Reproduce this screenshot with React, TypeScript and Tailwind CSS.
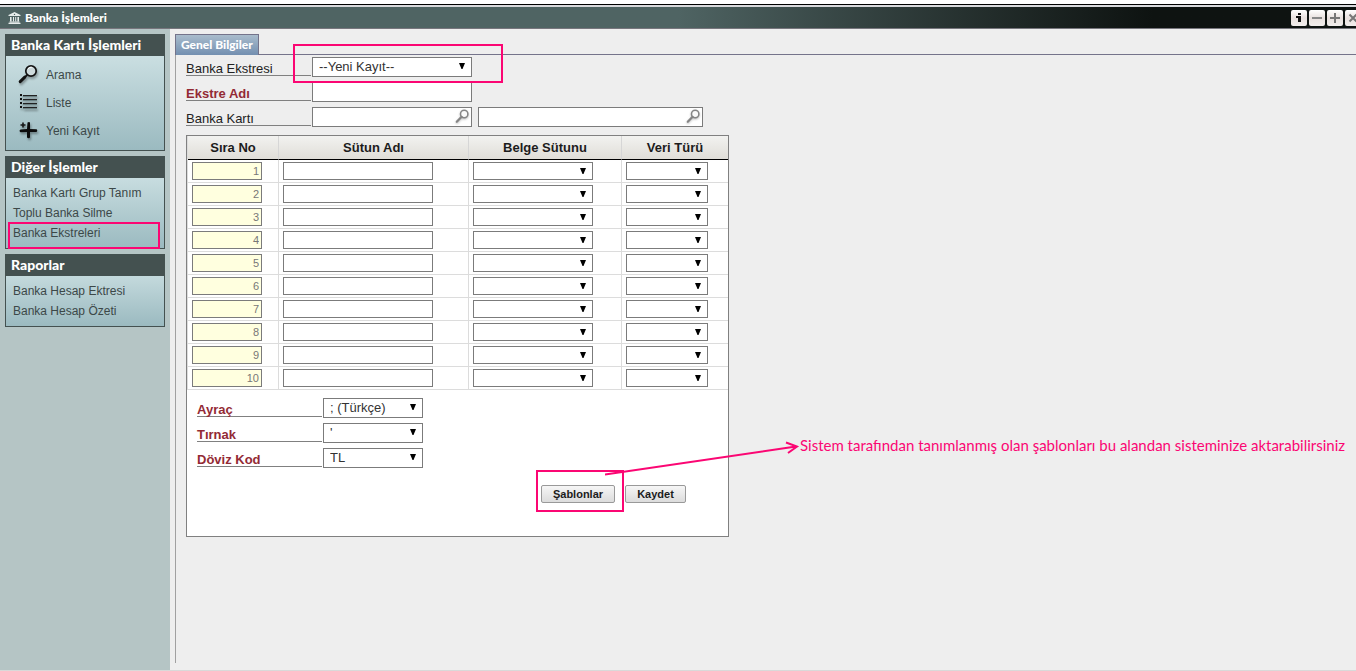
import React from "react";

const ui = "font-['Liberation_Sans',Arial,sans-serif]";
const heading = "font-['Lato','Open_Sans',sans-serif]";

function BankIcon() {
  return (
    <svg width="13" height="12" viewBox="0 0 13 12" fill="#e6eceb" aria-hidden="true">
      <path d="M6.5 0 0.5 3v1h12V3z" />
      <path d="M2 5h1.6v4.500H2zM5 5h1v4.500H5zM7.200 5h1v4.500h-1zM9.400 5H11v4.500H9.400z" />
      <path d="M1.500 9.500h10v1h-10zM0.500 10.800h12V12H0.500z" />
      <circle cx="6.500" cy="2.400" r="0.700" fill="#4f6463" />
    </svg>
  );
}

function SearchIcon() {
  return (
    <svg width="22" height="22" viewBox="0 0 22 22" fill="none" aria-hidden="true" className="drop-shadow-[1px_2px_1px_rgba(0,0,0,0.35)]">
      <circle cx="13" cy="7" r="5.200" stroke="#111" strokeWidth="1.700" fill="#e8f2f3" fillOpacity="0.700" />
      <path d="M10 4.800q1.500-2 3.800-1.600" stroke="#fff" strokeWidth="1" />
      <path d="M9.200 11 6.500 13.500" stroke="#111" strokeWidth="1.800" />
      <path d="M6.800 13.200 2.200 17.600" stroke="#111" strokeWidth="3" strokeLinecap="round" />
    </svg>
  );
}

function ListIcon() {
  return (
    <svg width="22" height="22" viewBox="0 0 22 22" aria-hidden="true" className="drop-shadow-[1px_2px_1px_rgba(0,0,0,0.3)]">
      {[3, 7, 11, 15].map((y) => (
        <g key={y}>
          <path d={`M5 ${y + 0.500}h14`} stroke="#222" strokeWidth="1" />
          <path d={`M5 ${y + 1.500}h14`} stroke="#6c8385" strokeWidth="1" />
          <rect x="2" y={y - 1} width="2" height="2" fill="#111" />
        </g>
      ))}
    </svg>
  );
}

function AddIcon() {
  return (
    <svg width="22" height="22" viewBox="0 0 22 22" aria-hidden="true" className="drop-shadow-[1px_2px_1px_rgba(0,0,0,0.35)]">
      <path d="M9.500 2.500q1.500-1 2.500 0V9l6.500.3q1.500 1 0 2.700H12v5.500q-1.300 1.600-3 0V12l-6.500.2q-2-1.400 0-2.700L9 9z" fill="#0c0c0c" />
      <path d="M5 2.500v5M2.500 5h5" stroke="#151515" strokeWidth="1.600" />
    </svg>
  );
}

function LookupIcon() {
  return (
    <svg width="15" height="15" viewBox="0 0 15 15" fill="none" aria-hidden="true" className="drop-shadow-[0_1px_1px_rgba(0,0,0,0.25)]">
      <circle cx="9.200" cy="5" r="3.700" stroke="#858585" strokeWidth="1.500" fill="#fafafa" />
      <path d="M6.600 7.800 1.800 12.800" stroke="#858585" strokeWidth="2.200" strokeLinecap="round" />
    </svg>
  );
}

type SelectProps = { id?: string; label?: string; options: string[]; box: string };

function Select({ id, label, options, box }: SelectProps) {
  return (
    <span className={`relative block ${box}`}>
      <select
        id={id}
        aria-label={label}
        className="block size-full appearance-none rounded-none border border-[#7b7b7b] bg-white pl-1.5 text-[13px] leading-4 text-[#333]"
      >
        {options.map((o) => (
          <option key={o}>{o}</option>
        ))}
      </select>
      <svg width="6" height="6" viewBox="0 0 6 6" aria-hidden="true" className="pointer-events-none absolute top-1.5 right-[7px]">
        <path d="M0 0h6L3.500 6h-1z" fill="#000" />
      </svg>
    </span>
  );
}

function Label({ id, required, children }: { id: string; required?: boolean; children: React.ReactNode }) {
  return (
    <label
      htmlFor={id}
      className={`mr-px block h-[19px] w-[125px] border-b border-[#808080] pt-1 text-[13px] leading-4 ${
        required ? "font-bold text-[#932a35]" : "text-[#222]"
      }`}
    >
      {children}
    </label>
  );
}

function Lookup({ id, label, box }: { id?: string; label?: string; box: string }) {
  return (
    <span className={`relative block h-5 ${box}`}>
      <input id={id} aria-label={label} type="text" className="block size-full border border-[#7b7b7b] bg-white pr-5 pl-1 text-[13px]" />
      <button type="button" aria-label="Ara" className="absolute top-0.5 right-0.5">
        <LookupIcon />
      </button>
    </span>
  );
}

function Highlight({ place }: { place: string }) {
  return <span aria-hidden="true" className={`pointer-events-none absolute z-10 border-2 border-[#fb0673] ${place}`} />;
}

function Panel({ title, children }: { title: string; children: React.ReactNode }) {
  return (
    <section className="border border-[#445150] bg-linear-to-b from-[#d5e7e9] to-[#9bbac0]">
      <h2 className={`-mt-px h-[22px] bg-[#445150] px-[5px] text-sm leading-[22px] font-black text-white ${heading}`}>{title}</h2>
      {children}
    </section>
  );
}

function LinkPanel({ title, links, marked }: { title: string; links: string[]; marked?: string }) {
  return (
    <Panel title={title}>
      <ul className="px-[7px] pt-[5px] pb-[5px]">
        {links.map((l) => (
          <li key={l} className="relative h-5 leading-5">
            <a href="#" className="whitespace-nowrap">{l}</a>
            {l === marked && <Highlight place="-left-[5px] -right-[3px] -top-px h-[27px]" />}
          </li>
        ))}
      </ul>
    </Panel>
  );
}

const tools = [
  { label: "Arama", icon: <SearchIcon /> },
  { label: "Liste", icon: <ListIcon /> },
  { label: "Yeni Kayıt", icon: <AddIcon /> },
];

const windowButtons = [
  { label: "Bilgi", icon: <path d="M7 3h3v2H7zM5 6h5v6H7V8H5z" fill="#111" /> },
  { label: "Küçült", icon: <path d="M3 7h10v2H3z" fill="#888" /> },
  { label: "Büyüt", icon: <path d="M7 3h2v4h4v2H9v4H7V9H3V7h4z" fill="#777" /> },
  { label: "Kapat", icon: <path d="m4.500 4.500 7 7m0-7-7 7" stroke="#777" strokeWidth="2" /> },
];

const columns = [
  { title: "Sıra No", width: "w-[91px]" },
  { title: "Sütun Adı", width: "w-[190px]" },
  { title: "Belge Sütunu", width: "w-[153px]" },
  { title: "Veri Türü", width: "w-[106px]" },
];

const rows = Array.from({ length: 10 }, (_, i) => i + 1);

const cell = "h-[23px] border-r border-b border-[#dcdcdc] p-0 pl-1 last:border-r-0";
const pushButton =
  "h-[18px] rounded-xs border border-[#999] bg-linear-to-b from-[#f6f6f6] to-[#dcdcdc] text-[11px] leading-4 font-bold text-[#1c1c1c]";

export default function App() {
  return (
    <div className={`flex min-h-screen flex-col overflow-x-hidden border-b border-[#d9d9d9] bg-[#eee] text-xs ${ui}`}>
      <div className="h-[7px] border-b-2 border-[#d9dadd] bg-white">
        <div className="mt-1 h-px bg-black" />
      </div>
      <header className="flex h-[22px] items-center justify-between border-b border-[#77767d] bg-linear-to-r from-[#4f6463] from-50% to-[#0e1311] to-85%">
        <h1 className={`flex items-center gap-1 pl-2 text-xs leading-5 font-black text-white ${heading}`}>
          <BankIcon />
          {"Banka İşlemleri"}
        </h1>
        <div className="-mr-[5px] flex gap-0.5">
          {windowButtons.map((b) => (
            <button key={b.label} type="button" aria-label={b.label} className="size-4 rounded-xs bg-linear-to-b from-white via-[#e9e1df] to-[#f2eeed]">
              <svg width="16" height="16" viewBox="0 0 16 16" aria-hidden="true">{b.icon}</svg>
            </button>
          ))}
        </div>
      </header>

      <div className="flex grow">
        <nav className="flex w-[170px] shrink-0 flex-col gap-[5px] bg-[#b5c5c5] p-[5px] text-[#3c4848]">
          <Panel title="Banka Kartı İşlemleri">
            <ul className="px-3 pt-[5px] pb-[5px]">
              {tools.map((t) => (
                <li key={t.label}>
                  <a href="#" className="flex h-7 items-center gap-1.5">
                    {t.icon}
                    {t.label}
                  </a>
                </li>
              ))}
            </ul>
          </Panel>
          <LinkPanel title="Diğer İşlemler" links={["Banka Kartı Grup Tanım", "Toplu Banka Silme", "Banka Ekstreleri"]} marked="Banka Ekstreleri" />
          <LinkPanel title="Raporlar" links={["Banka Hesap Ektresi", "Banka Hesap Özeti"]} />
        </nav>

        <main className="flex min-w-0 grow flex-col pt-[5px] pb-[7px] pl-[5px]">
          <div className="flex">
            <button type="button" className={`h-[21px] border border-b-0 border-[#74738a] bg-linear-to-b from-[#a9bccc] to-[#738fb0] px-[5px] text-xs leading-5 font-black whitespace-nowrap text-white ${heading}`}>
              Genel Bilgiler
            </button>
            <div className="grow border-b border-[#74738a]" />
          </div>

          <form className="grow border-l border-[#a0a0a0] pt-0.5 pl-2.5">
            <div className="flex flex-col gap-[5px]">
              <div className="relative flex h-5">
                <Label id="ekstre">Banka Ekstresi</Label>
                <Select id="ekstre" options={["--Yeni Kayıt--"]} box="h-5 w-40" />
                <Highlight place="left-[107px] -top-[13px] h-[39px] w-[210px]" />
              </div>
              <div className="flex h-5">
                <Label id="ekstre-adi" required>Ekstre Adı</Label>
                <input id="ekstre-adi" type="text" className="h-5 w-40 border border-[#7b7b7b] bg-white px-1 text-[13px]" />
              </div>
              <div className="flex h-5">
                <Label id="banka-karti">Banka Kartı</Label>
                <Lookup id="banka-karti" box="w-40 mr-1.5" />
                <Lookup label="Banka kartı adı" box="w-[225px]" />
              </div>
            </div>

            <div className="mt-2 w-[543px] border border-[#808080] bg-white pb-[33px]">
              <div className="border-l border-[#dcdcdc]">
                <table className="w-full table-fixed border-separate border-spacing-0">
                  <thead>
                    <tr>
                      {columns.map((c) => (
                        <th key={c.title} className={`h-6 border-r border-b border-r-[#d6d6d6] border-b-black bg-linear-to-b from-[#f2f2f0] to-[#e0ded8] p-0 text-[13px] font-bold text-[#1c1c1c] last:border-r-0 ${c.width}`}>
                          {c.title}
                        </th>
                      ))}
                    </tr>
                  </thead>
                  <tbody>
                    {rows.map((n) => (
                      <tr key={n}>
                        <td className={cell}>
                          <input aria-label={`Sıra No ${n}`} readOnly value={n} className="block h-[18px] w-[70px] border border-[#7b7b7b] bg-[#ffffdf] px-0.5 text-right text-[11px] text-[#777]" />
                        </td>
                        <td className={cell}>
                          <input aria-label={`Sütun Adı ${n}`} className="block h-[18px] w-[150px] border border-[#7b7b7b] bg-white px-1" />
                        </td>
                        <td className={cell}>
                          <Select label={`Belge Sütunu ${n}`} options={[""]} box="h-[18px] w-[120px]" />
                        </td>
                        <td className={cell}>
                          <Select label={`Veri Türü ${n}`} options={[""]} box="h-[18px] w-[82px]" />
                        </td>
                      </tr>
                    ))}
                  </tbody>
                </table>
              </div>

              <div className="flex flex-col gap-[5px] pt-2 pl-2.5">
                <div className="flex h-5">
                  <Label id="ayrac" required>Ayraç</Label>
                  <Select id="ayrac" options={["; (Türkçe)"]} box="h-5 w-[100px]" />
                </div>
                <div className="flex h-5">
                  <Label id="tirnak" required>Tırnak</Label>
                  <Select id="tirnak" options={["'"]} box="h-5 w-[100px]" />
                </div>
                <div className="flex h-5">
                  <Label id="doviz" required>Döviz Kod</Label>
                  <Select id="doviz" options={["TL"]} box="h-5 w-[100px]" />
                </div>
              </div>

              <div className="mt-[17px] flex justify-end gap-2.5 pr-[42px]">
                <div className="relative">
                  <button type="button" className={`block w-[74px] ${pushButton}`}>Şablonlar</button>
                  <Highlight place="-left-[5px] -top-[15px] h-[42px] w-[88px]" />
                  <div className="pointer-events-none absolute -top-[50px] left-16 z-10 flex items-start">
                    <svg width="195" height="42" viewBox="0 0 195 42" fill="none" stroke="#fb0673" strokeWidth="2" aria-hidden="true">
                      <path d="M0 39.500 191 11.500M181 7.500l11 4-9 6.500" />
                    </svg>
                    <p className="font-['Lato','Open_Sans',sans-serif] text-[15px] leading-5 whitespace-nowrap text-[#fb0673]">
                      Sistem tarafından tanımlanmış olan şablonları bu alandan sisteminize aktarabilirsiniz
                    </p>
                  </div>
                </div>
                <button type="button" className={`w-[61px] ${pushButton}`}>Kaydet</button>
              </div>
            </div>
          </form>
        </main>
      </div>
    </div>
  );
}
